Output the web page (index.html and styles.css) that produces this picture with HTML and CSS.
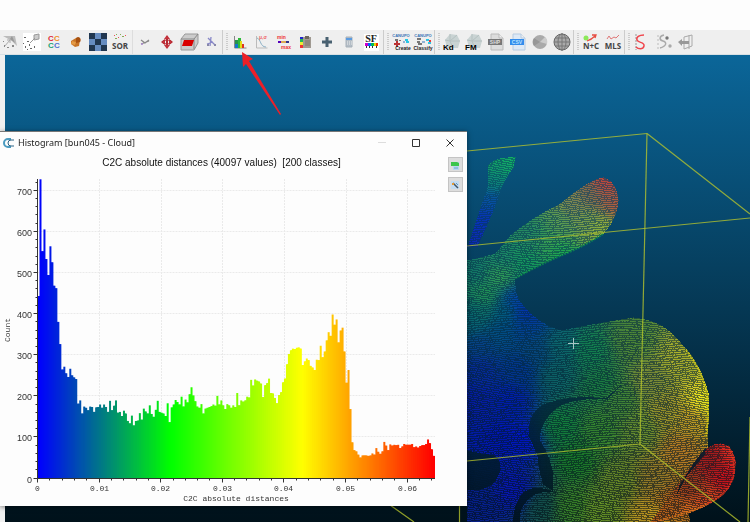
FILE: index.html
```html
<!DOCTYPE html>
<html lang="en">
<head>
  <meta charset="UTF-8">
  <meta name="viewport" content="width=device-width, initial-scale=1.0">
  <title>Histogram</title>
  <link rel="stylesheet" href="styles.css">
</head>
<body>
  <div class="app">
    <div class="toolbar">
      <div class="tools first">
        <button aria-label="Extract section"><svg viewBox="0 0 20 20"><path d="M3 4h12l2 10-5-5z" fill="#bbb"/><path d="M12 4l3 7-5-4z" fill="#999"/><path d="M4 15l6-7M7 8h3v3" stroke="#aaa" fill="none"/><path d="M4 13h1v2H4zM7 15h2v1H7zM12 13h2v2h-2zM3 9h1v1H3z" fill="#888"/></svg></button>
        <button aria-label="Subsample"><svg viewBox="0 0 20 20"><path fill="#fff" d="M1 1h18v18H1z"/><path d="M2 5h2v1H2zM5 9h2v1H5zM3 14h1v2H3zM7 12h1v2H7zM8 16h2v1H8zM12 14h1v2h-1zM1 11h1v1H1zM5 17h1v1H5z" fill="#666"/><path d="M8 11l5-5M12 3l5-1v5l-5 1z" stroke="#999" fill="#ccc"/></svg></button>
        <button aria-label="Connected components"><svg viewBox="0 0 20 20"><g font-size="8"><text x="4" y="9" fill="#e02838">C</text><text x="10" y="9" fill="#f09028">C</text><text x="4" y="16" fill="#20a075">C</text><text x="10" y="16" fill="#5070d0">C</text></g></svg></button>
        <button aria-label="Mesh"><svg viewBox="0 0 20 20"><path d="M5 9l5-3 4 2-1 6-4 1-4-3z" fill="#c87426"/><path d="M10 6c3-3 6 1 4 4l-4 1z" fill="#a85110"/><path d="M6 9l4 1-1 3-4-1z" fill="#e59b45"/></svg></button>
        <button aria-label="Checkerboard"><svg viewBox="0 0 20 20"><path fill="#20364f" d="M1 1h18v18H1z"/><path d="M7 1h6v6H7zM1 7h6v6H1zM13 7h6v6h-6zM7 13h6v6H7z" fill="#668cc0"/></svg></button>
        <button aria-label="SOR filter"><svg viewBox="0 0 20 20"><path d="M4 3h1v1H4zM8 5h1v1H8zM15 3h1v1h-1z" fill="#e55"/><path d="M6 2h1v1H6zM12 4h2v1h-2zM10 2h1v1h-1zM5 6h2v1H5z" fill="#8a5"/><text x="10" y="17" text-anchor="middle" class="label">SOR</text></svg></button>
      </div>
      <div class="tools plain">
        <button aria-label="Segment"><svg viewBox="0 0 20 20"><path d="M6 8l4 3 4-3M6 12l8-3" stroke="#888" stroke-width="1.3" fill="none"/><circle cx="7" cy="12" r="1" fill="#a8c"/></svg></button>
        <button aria-label="Translate and rotate"><svg viewBox="0 0 20 20"><path d="M10 4v12" stroke="#b62b34" stroke-width="2"/><path d="M7 7l3-4 3 4zM7 13l3 4 3-4zM8 7v6l-4-3zM12 7v6l4-3z" fill="#c3323c"/><ellipse cx="10" cy="10" rx="5" ry="2" fill="none" stroke="#b62b34"/></svg></button>
        <button aria-label="Cross section"><svg viewBox="0 0 20 20"><path d="M2 7l4-5h13v9l-4 7H2z" fill="#ccc" stroke="#999"/><path d="M2 7h13v10M15 7l4-5" fill="none" stroke="#888"/><path d="M5 8h10l-2 6H3z" fill="#d90000"/></svg></button>
        <button aria-label="Pick points"><svg viewBox="0 0 20 20"><path d="M7 6l7 7M10 5l-1 9M6 12l6-2" stroke="#8888c8" stroke-width="1.3" fill="none"/><path d="M6 12h2v2H6zM13 12h2v2h-2z" fill="#88a"/></svg></button>
      </div>
      <div class="tools">
        <button aria-label="Histogram"><svg viewBox="0 0 20 20"><path d="M4.500 4v12h12" fill="none" stroke="#888"/><path fill="#26934d" d="M5 8h3v8H5z"/><path fill="#17c" d="M5 12h3v4H5z"/><path fill="#2dbb38" d="M8 6h3v10H8z"/><path fill="#e3db19" d="M10 9h2v7h-2z"/><path fill="#d32" d="M12 12h2v4h-2z"/></svg></button>
        <button aria-label="Fit distribution"><svg viewBox="0 0 20 20"><path d="M4.500 4v12h11" fill="none" stroke="#bbb"/><path d="M5 6c4 1 3 9 9 9" fill="none" stroke="#8bb0c5"/><text x="7" y="7" font-size="5" fill="#e66">μ,σ</text></svg></button>
        <button aria-label="Filter by value"><svg viewBox="0 0 20 20"><text x="3" y="7" font-size="5" fill="#e33">min</text><text x="7" y="17" font-size="5" fill="#e33">max</text><path d="M4 10h3" stroke="#50b" stroke-width="2"/><path d="M7 10h5" stroke="#da5" stroke-width="2"/><path d="M12 10h3" stroke="#338" stroke-width="2"/></svg></button>
        <button aria-label="Scalar fields"><svg viewBox="0 0 20 20"><path fill="#a09a92" d="M7 5h8v11H7z"/><path fill="#6e665c" d="M9 4h4v3H9z"/><path d="M9 9h5M9 11h5M9 13h5" stroke="#7d766d"/><path fill="#22c" d="M4 5h3v2H4z"/><path fill="#2b5" d="M4 7h3v3H4z"/><path fill="#ee3" d="M4 10h3v3H4z"/><path fill="#e33" d="M4 13h3v3H4z"/></svg></button>
        <button aria-label="Add scalar field"><svg viewBox="0 0 20 20"><path d="M9 5v10M4 10h10" stroke="#496171" stroke-width="3"/></svg></button>
        <button aria-label="Calculator"><svg viewBox="0 0 20 20"><path fill="#b4bdc6" stroke="#a7b1ba" d="M6 5h6v10H6z"/><path d="M6 7h6" stroke="#5b9be0" stroke-width="2"/><path d="M7 10h5M7 12h5" stroke="#eee" stroke-dasharray="1 1"/></svg></button>
        <button aria-label="SF gradient"><svg viewBox="0 0 20 20"><path fill="#fff" d="M2 2h15v17H2z"/><text x="9" y="10" text-anchor="middle" font-size="10" class="serif">SF</text><path d="M3 11h3v3H3z" fill="#c0c"/><path d="M6 11h3v3H6z" fill="#06f"/><path d="M9 11h3v3H9z" fill="#0b5"/><path d="M12 11h2v3h-2z" fill="#ec0"/><path d="M14 11h2v3h-2z" fill="#e30"/><path d="M4.500 14v2M7.500 14v2M10.500 14v2M14.500 14v2" stroke="#333"/></svg></button>
      </div>
      <div class="tools">
        <button aria-label="Canupo create"><svg viewBox="0 0 20 20"><text x="10" y="5" text-anchor="middle" font-size="4" fill="#3673b5">CANUPO</text><path d="M4 7h3v2H4zM4 11h2v1H4zM8 8h2v1H8z" fill="#777"/><path d="M12 10h2" stroke="#37b"/><path d="M14 8h3M15 10h3" stroke="#2bc7e5" stroke-width="2"/><path d="M3 12h6M6 9v6" stroke="#b33" stroke-width="2"/><text x="12" y="18" text-anchor="middle" font-size="5">Create</text></svg></button>
        <button aria-label="Canupo classify"><svg viewBox="0 0 20 20"><text x="10" y="5" text-anchor="middle" font-size="4" fill="#3673b5">CANUPO</text><path d="M4 7h4M4 10h3M5 12h4" stroke="#777" stroke-width="2"/><path d="M9 10h3" stroke="#37b"/><path d="M13 8h3M15 11h3" stroke="#2bc7e5" stroke-width="2"/><path d="M16 8h2v2h-2z" fill="#e33"/><text x="10" y="18" text-anchor="middle" font-size="5">Classify</text></svg></button>
      </div>
      <div class="tools">
        <button aria-label="Kd tree"><svg viewBox="0 0 20 20"><path d="M3 8l5-6 7 1 3 6-2 7H5z" fill="#c9d3d3"/><path d="M3 8l5 1 7-6M8 2v7l3 7M8 9h10" stroke="#b5c1c1" fill="none"/><text x="1" y="18" font-size="8" fill="#000">Kd</text></svg></button>
        <button aria-label="Fast marching"><svg viewBox="0 0 20 20"><path d="M3 8l5-6 7 1 3 6-2 7H5z" fill="#c9d3d3"/><path d="M3 8l5 1 7-6M8 2v7l3 7M8 9h10" stroke="#b5c1c1" fill="none"/><text x="1" y="18" font-size="8" fill="#000">FM</text></svg></button>
        <button aria-label="Export SHP"><svg viewBox="0 0 20 20"><path d="M5 2h8l4 4v12H5z" fill="#ddd" stroke="#bbb"/><path d="M13 2v4h4" fill="#eee" stroke="#bbb"/><path fill="#777" d="M2 7h14v6H2z"/><text x="9" y="12" text-anchor="middle" font-size="5" fill="#ddd">SHP</text></svg></button>
        <button aria-label="Import CSV"><svg viewBox="0 0 20 20"><path d="M5 2h8l4 4v12H5z" fill="#dde9f6" stroke="#b6cbe1"/><path d="M13 2v4h4" fill="#eee" stroke="#b6cbe1"/><path fill="#338cec" d="M2 7h14v6H2z"/><text x="9" y="12" text-anchor="middle" font-size="5" fill="#b8e3ff">CSV</text></svg></button>
        <button aria-label="Sphere shading"><svg viewBox="0 0 20 20"><circle cx="10" cy="10" r="7" fill="#aaa"/><path d="M10 10l5-5a7 7 0 0 1 2 7z" fill="#ccc"/><path d="M10 10l-6 4a7 7 0 0 1 0-8z" fill="#979797"/></svg></button>
        <button aria-label="Sphere grid"><svg viewBox="0 0 20 20"><circle cx="10" cy="10" r="8" fill="#aaa" stroke="#666"/><path d="M10 1v18M2 10h16M3 6h14M3 14h14" stroke="#777"/><ellipse cx="10" cy="10" rx="4" ry="8" fill="none" stroke="#777"/></svg></button>
      </div>
      <div class="tools">
        <button aria-label="Normals and curvature"><svg viewBox="0 0 20 20"><circle cx="5" cy="6" r="2.5" fill="#8ce85a"/><path d="M6 9c3-1 5-2 8-5M11 3h4l-1 3" stroke="#e64d42" stroke-width="1.3" fill="none"/><text x="10" y="17" text-anchor="middle" class="label">N+C</text></svg></button>
        <button aria-label="MLS smoothing"><svg viewBox="0 0 20 20"><path d="M4 7l2-3 2 3 3-2 2 1 3-3" stroke="#df7777" fill="none"/><text x="10" y="17" text-anchor="middle" class="label">MLS</text></svg></button>
      </div>
      <div class="tools">
        <button aria-label="Trace polyline"><svg viewBox="0 0 20 20"><path d="M4 2v16" stroke="#999" stroke-dasharray="2 1"/><path d="M12 3C7 3 4 5 5 8s8 2 7 6-6 3-8 1" fill="none" stroke="#f0454c" stroke-width="1.5"/></svg></button>
        <button aria-label="Polyline sections"><svg viewBox="0 0 20 20"><path d="M4 3v14" stroke="#bbb" stroke-dasharray="2 2"/><path d="M10 3c-5 1-5 5-1 6s4 5-3 7" fill="none" stroke="#aaa" stroke-width="1.5"/><circle cx="13" cy="6" r="1.700" fill="#777"/><circle cx="16" cy="14" r="1.700" fill="#aaa"/></svg></button>
        <button aria-label="Unfold"><svg viewBox="0 0 20 20"><path d="M8 5l8-2v11l-8 3zM13 3v14" stroke="#aaa" fill="none"/><path d="M2 10l4-3v2h7v3H6v2z" fill="#999"/></svg></button>
      </div>
    </div>

    <div class="view">
      <canvas id="cloud" width="745" height="467"></canvas>
    </div>

    <svg class="arrow" viewBox="0 0 40 64" aria-hidden="true"><path d="M1 0l11 7-4 2 32 53-1 1L5 12l-3 3z" fill="#ec2028"/></svg>

    <section class="dialog">
      <header class="titlebar">
        <svg class="logo" viewBox="0 0 12 10"><path d="M8 1H5a4 4 0 0 0 0 8h3" fill="none" stroke="#4b9bc0" stroke-width="2"/><path d="M11 2H8a3 3 0 0 0 0 6h3" fill="none" stroke="#2a6384" stroke-width="1"/></svg>
        <h1>Histogram [bun045 - Cloud]</h1>
        <button class="win" aria-label="Minimize" disabled><svg viewBox="0 0 10 10"><path d="M1 4.500h8" stroke="#ddd"/></svg></button>
        <button class="win" aria-label="Maximize"><svg viewBox="0 0 10 10"><path d="M1.500 1.500h7v7h-7z" fill="none" stroke="#333"/></svg></button>
        <button class="win" aria-label="Close"><svg viewBox="0 0 10 10"><path d="M1.500 1.500l7 7M8.500 1.500l-7 7" stroke="#333"/></svg></button>
      </header>
      <div class="content">
        <div class="plot">
          <h2>C2C absolute distances (40097 values)&nbsp; [200 classes]</h2>
          <svg id="chart" viewBox="0 0 443 335"></svg>
        </div>
        <div class="side">
          <button aria-label="Export to CSV"><svg viewBox="0 0 12 12"><path d="M4 3h6v8H4z" fill="#b9d7ee"/><path d="M2 3h6l2 1v3H2z" fill="#3cc54a"/><path d="M5 9h4" stroke="#6aa4cf"/></svg></button>
          <button aria-label="Export to image"><svg viewBox="0 0 12 12"><path d="M2 2h8v8H2z" fill="#c2dcf3"/><path d="M4 4l5 5" stroke="#456" stroke-width="1.500"/><path d="M3 4h2v2H3z" fill="#e59a35"/><path d="M7 4l2 2" stroke="#69b"/></svg></button>
        </div>
      </div>
    </section>
  </div>
  <script src="script.js"></script>
</body>
</html>
```

FILE: styles.css
```css
body {
  margin: 0;
  background: #f0f0f0;
  font-family: "Liberation Sans", Arial, sans-serif;
  overflow: hidden;
}
.app {
  position: relative;
  height: 100vh;
  display: flex;
  flex-direction: column;
}
button {
  border: none;
  background: none;
  padding: 0;
  display: flex;
  align-items: center;
  justify-content: center;
}
.toolbar {
  display: flex;
  flex: none;
  height: 24px;
  border-top: 30px solid #fdfdfd;
  border-bottom: 1px solid #d8e0e4;
  background: #efefef;
}
.tools {
  display: flex;
  flex: none;
  align-items: center;
  border-left: 1px solid #ccc;
  padding-left: 6px;
  background: repeating-linear-gradient(#ccc 0 1px, transparent 1px 2px) 3px 3px / 2px 18px no-repeat;
}
.tools.first {
  border: none;
  padding: 0;
  margin-left: -1px;
  background: none;
}
.tools.plain {
  border-color: #ddd;
  margin-left: 1px;
  padding-left: 1px;
  background: none;
}
.tools button {
  width: 22px;
  height: 24px;
}
.tools svg {
  width: 20px;
  height: 20px;
  font-weight: bold;
  fill: #222;
}
.label {
  font-family: "Open Sans", sans-serif;
  font-size: 8px;
  fill: #444;
}
.serif {
  font-family: "Liberation Serif", serif;
}
.view {
  flex: 1;
  margin-left: 5px;
  overflow: hidden;
  background: linear-gradient(#0b6699, #00111a);
}
.view canvas {
  display: block;
}
.arrow {
  position: absolute;
  left: 241px;
  top: 52px;
  width: 40px;
  height: 64px;
}
.dialog {
  position: absolute;
  left: 0;
  top: 131px;
  width: 467px;
  background: #fdfdfd;
  border-top: 1px solid #777;
  box-sizing: border-box;
  box-shadow: 0 1px 5px rgba(0, 0, 0, 0.5);
}
.titlebar {
  display: flex;
  align-items: center;
  height: 21px;
}
.titlebar .logo {
  width: 12px;
  height: 10px;
  margin: 0 3px 0 3px;
}
.titlebar h1 {
  flex: 1;
  margin: 0;
  font: 9px/20px "Noto Sans", sans-serif;
  color: #222;
}
.win {
  width: 34px;
  height: 20px;
}
.win svg {
  width: 10px;
  height: 10px;
}
.content {
  display: flex;
}
.plot {
  flex: 1;
}
.plot h2 {
  margin: 0;
  font-size: 10px;
  font-weight: normal;
  line-height: 20px;
  height: 18px;
  text-align: center;
  color: #111;
}
#chart {
  display: block;
  width: 100%;
  fill: #333;
  font-family: "Liberation Mono", monospace;
  font-size: 8px;
}
#chart .count {
  font-family: "Liberation Sans", Arial, sans-serif;
  font-size: 9px;
}
.grid {
  stroke: #eaeaea;
  stroke-dasharray: 2 1;
}
.axis {
  stroke: #333;
}
.side {
  width: 24px;
  padding-top: 4px;
  display: flex;
  flex-direction: column;
  align-items: center;
  gap: 5px;
}
.side button {
  width: 15px;
  height: 15px;
  background: #ddd;
  border: 1px solid #c4c4c4;
}
.side svg {
  width: 12px;
  height: 12px;
}
```

FILE: script.js
```js
// ---- histogram ----
const counts = [
  444, 728, 553, 606, 534, 495, 565, 526, 469, 463, 381, 327, 265, 272, 256, 247, 267, 251, 246, 242,
  182, 190, 158, 175, 172, 166, 175, 174, 162, 173, 174, 180, 172, 180, 174, 162, 189, 166, 177, 190,
  160, 162, 152, 165, 158, 140, 134, 153, 129, 140, 141, 159, 143, 170, 163, 158, 178, 157, 150, 167,
  189, 162, 160, 158, 152, 183, 137, 173, 180, 191, 186, 180, 199, 175, 192, 185, 205, 222, 202, 188,
  175, 172, 181, 158, 170, 172, 174, 176, 180, 177, 201, 180, 190, 178, 169, 181, 178, 172, 178, 174,
  208, 178, 190, 187, 190, 199, 197, 240, 226, 241, 238, 236, 231, 198, 227, 232, 243, 208, 207, 196,
  183, 203, 210, 234, 243, 278, 303, 312, 316, 315, 318, 319, 316, 276, 285, 292, 288, 274, 270, 264,
  289, 288, 323, 295, 309, 336, 356, 347, 399, 374, 387, 331, 360, 367, 309, 233, 264, 169, 88, 69,
  66, 58, 51, 56, 56, 56, 55, 56, 61, 58, 74, 65, 60, 66, 89, 80, 69, 83, 80, 82,
  81, 82, 74, 78, 84, 82, 82, 82, 84, 76, 78, 75, 79, 81, 81, 84, 95, 86, 71, 55
];
const left = 37.5, base = 307.5, top0 = 8, right = 435;
const perCount = 0.411, step = (right - left) / counts.length;

// blue -> green -> yellow -> red
function ramp(t) {
  if (t < 1 / 3) return [0, 255 * t * 3, 255 * (1 - t * 3)];
  if (t < 2 / 3) return [255 * (t * 3 - 1), 255, 0];
  return [255, 255 * (3 - t * 3), 0];
}

function line(cls, x1, y1, x2, y2) {
  return `<line class="${cls}" x1="${x1}" y1="${y1}" x2="${x2}" y2="${y2}"/>`;
}

let out = '';
for (let n = 1; n <= 7; n++) {
  const y = Math.round(base - n * 100 * perCount) - 0.5;
  out += line('grid', left, y, right, y);
}
for (let n = 1; n <= 6; n++) {
  const x = Math.round(left + n * 61.6) + 0.5;
  out += line('grid', x, top0, x, base);
}
counts.forEach((c, i) => {
  const h = c * perCount;
  const color = `rgb(${ramp(i / 199).map(Math.round)})`;
  out += `<rect x="${left + i * step}" y="${base - h}" width="${step}" height="${h}" fill="${color}"/>`;
  // close the seam towards the next bar
  const low = Math.min(c, counts[i + 1] || 0) * perCount;
  if (low) out += `<rect x="${left + i * step + 1}" y="${base - low}" width="2" height="${low}" fill="${color}"/>`;
});
out += line('axis', left, top0, left, base) + line('axis', left, base, right, base);
for (let n = 0; n <= 36; n++) {
  const y = Math.round(base - n * 20 * perCount) - 0.5;
  if (y >= top0) out += line('axis', n % 5 ? left - 2 : left - 4, y, left, y);
  if (n % 5 === 0) out += `<text class="count" x="32" y="${y + 4}" text-anchor="end">${n * 20}</text>`;
}
for (let n = 0; n <= 32; n++) {
  const x = Math.round(left + n * 12.32 - 0.5) + 0.5;
  out += line('axis', x, base, x, n % 5 ? base + 2 : base + 4);
  if (n % 5 === 0) out += `<text x="${x}" y="${base + 12}" text-anchor="middle">${n ? '0.0' + n / 5 : '0'}</text>`;
}
out += `<text x="236" y="330" text-anchor="middle">C2C absolute distances</text>`;
out += `<text transform="translate(10 159) rotate(-90)" text-anchor="middle">Count</text>`;
document.getElementById('chart').innerHTML = out;

// ---- point cloud ----
const ctx = document.getElementById('cloud').getContext('2d');

const shapes = [
  'M488 165Q494 156 515 157L513 167Q500 185 497 200Q489 220 477 246L467 246Q480 207 487 187Z',
  'M467 260Q485 256 495 253L510 235Q530 218 560 203Q590 178 603 177Q616 181 618 200Q617 218 603 233Q585 245 560 255Q535 266 515 278Q514 295 522 304Q536 322 560 330Q595 323 633 317Q660 320 673 335Q700 360 708 393Q709 417 707 437L707 447Q700 465 683 483L690 522L467 522Z',
  'M650 522Q670 495 693 463Q706 443 720 443Q732 444 735 460Q736 482 722 495Q700 512 660 521Z'
].map(d => new Path2D(d));
const holes = [
  'M528 435Q528 410 546 403Q570 394 605 398L620 385L607 399Q575 397 558 406Q540 420 539 440Q548 452 552 470L552 490L543 484Q538 470 537 455Z',
  'M467 450L485 454Q500 453 500 468Q497 485 480 489L467 489Z',
  'M513 522Q512 505 523 492Q535 483 555 492Q535 489 525 502Q518 510 520 522Z',
  'M679 485L693 463L706 446L704 454L686 476L676 495Z'
].map(d => new Path2D(d));

// scalar colour samples, one list for each shape: x, y, r, g, b
const samples = [
  [
    [495, 165, 15, 130, 75], [513, 160, 15, 150, 75], [493, 180, 10, 110, 90], [490, 200, 5, 60, 130],
    [485, 220, 5, 35, 150], [475, 240, 10, 30, 150]
  ],
  [
    [470, 320, 5, 80, 90], [480, 345, 5, 50, 110], [475, 400, 5, 20, 135], [510, 400, 0, 20, 145],
    [520, 440, 0, 15, 165], [500, 330, 0, 60, 105], [525, 325, 0, 50, 120], [535, 350, 5, 55, 100],
    [520, 370, 0, 40, 115], [480, 370, 5, 30, 125], [500, 440, 0, 15, 145],
    [480, 505, 5, 25, 115], [515, 490, 5, 15, 150], [560, 345, 10, 85, 85], [555, 375, 10, 80, 80],
    [590, 350, 15, 105, 60], [600, 385, 20, 100, 50], [560, 425, 15, 105, 45], [575, 460, 20, 100, 30],
    [540, 505, 15, 65, 60], [570, 505, 45, 105, 30], [630, 340, 65, 110, 40], [650, 380, 105, 115, 40],
    [600, 430, 45, 110, 35], [620, 400, 55, 110, 40],
    [640, 430, 85, 115, 35], [620, 480, 85, 110, 30], [600, 510, 85, 120, 30], [680, 360, 145, 145, 30],
    [703, 400, 210, 195, 20], [690, 420, 160, 125, 25], [680, 450, 155, 100, 25],
    [665, 410, 130, 120, 30], [655, 480, 125, 100, 30], [650, 515, 165, 130, 25], [672, 500, 150, 80, 20],
    [605, 182, 170, 50, 40], [613, 200, 150, 70, 45], [590, 195, 110, 85, 55], [575, 205, 110, 110, 60],
    [600, 228, 125, 150, 40], [585, 220, 100, 130, 55], [560, 225, 80, 130, 60], [550, 240, 50, 130, 60],
    [560, 252, 20, 140, 60], [530, 235, 30, 110, 75], [525, 262, 15, 125, 70], [500, 260, 20, 105, 80],
    [500, 275, 45, 135, 60], [475, 270, 15, 95, 80], [485, 295, 30, 125, 60], [480, 312, 10, 90, 80],
    [515, 300, 0, 50, 140], [525, 312, 0, 30, 150], [505, 312, 0, 75, 95]
  ],
  [
    [672, 505, 150, 80, 20], [690, 490, 120, 45, 20], [690, 512, 200, 100, 25], [715, 460, 130, 20, 20],
    [725, 475, 170, 10, 20], [705, 502, 190, 60, 25], [733, 455, 220, 40, 25]
  ]
];

function colorAt(list, x, y) {
  let sum = 0, r = 0, g = 0, b = 0;
  for (const s of list) {
    const d = (x - s[0]) ** 2 + (y - s[1]) ** 2 + 160;
    const w = 1 / (d * d);
    sum += w;
    r += w * s[2];
    g += w * s[3];
    b += w * s[4];
  }
  return [r / sum, g / sum, b / sum];
}

for (let y = 156; y < 522; y++) {
  for (let x = 467; x < 740; x++) {
    let k = shapes.length - 1;
    while (k >= 0 && !ctx.isPointInPath(shapes[k], x, y)) k--;
    if (k < 0) continue;
    const dark = holes.some(h => ctx.isPointInPath(h, x, y));
    // scan rows follow the surface
    const row = Math.floor(y + 4 * Math.sin(x / 31) + 2 * Math.sin(y / 17 + x / 40));
    const noise = Math.abs(Math.sin(x * 12.9898 + y * 78.233) * 43758.5453) % 1;
    const dot = row % 2 === 0 && noise > 0.2;
    const gain = dot ? 1.3 : 1;
    const c = colorAt(samples[k], x, y).map(v => Math.round(Math.min(255, v * gain)));
    const alpha = dark ? 0.12 : (dot ? 0.75 : 0.42) + noise * 0.2;
    ctx.fillStyle = `rgba(${c}, ${alpha})`;
    ctx.fillRect(x - 5, y - 55, 1, 1);
  }
}

ctx.translate(-5, -55);

// bright rims
ctx.lineWidth = 2;
ctx.setLineDash([2, 1]);
[
  ['rgba(230, 220, 20, 0.7)', 'M686 350Q702 370 707 393Q709 417 706 437'],
  ['rgba(240, 60, 30, 0.6)', 'M728 446Q737 462 733 478Q726 496 707 504'],
  ['rgba(230, 130, 30, 0.6)', 'M707 504Q690 513 660 520'],
  ['rgba(20, 180, 70, 0.5)', 'M603 234Q585 246 560 256Q535 267 516 278']
].forEach(([color, d]) => {
  ctx.strokeStyle = color;
  ctx.stroke(new Path2D(d));
});
ctx.setLineDash([]);

// bounding box
ctx.strokeStyle = 'rgba(180, 195, 45, 0.8)';
ctx.lineWidth = 1.2;
[
  [467, 151, 647, 133.5], [647, 133.5, 750, 214], [467, 246, 750, 218],
  [647, 133.5, 640, 444], [467, 461, 640, 444], [640, 444, 740, 522],
  [750, 417, 748, 522], [390, 505, 414, 522], [459.5, 505, 459.5, 522]
].forEach(([x1, y1, x2, y2]) => {
  ctx.beginPath();
  ctx.moveTo(x1, y1);
  ctx.lineTo(x2, y2);
  ctx.stroke();
});

// cursor
ctx.fillStyle = '#a9c4c4';
ctx.fillRect(568, 343, 11, 1);
ctx.fillRect(573, 338, 1, 11);
```
